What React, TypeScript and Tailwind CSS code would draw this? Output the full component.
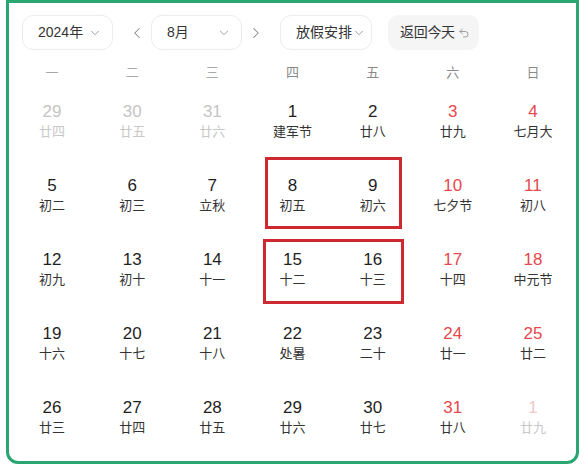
import { ChevronDown, ChevronLeft, ChevronRight, Undo2 } from "lucide-react";

type Day = { n: number; l: string; kind: "muted" | "normal" | "red" | "mutedRed" };

const weekdays = ["一", "二", "三", "四", "五", "六", "日"];

const raw: [number, string][] = [
  [29, "廿四"], [30, "廿五"], [31, "廿六"], [1, "建军节"], [2, "廿八"], [3, "廿九"], [4, "七月大"],
  [5, "初二"], [6, "初三"], [7, "立秋"], [8, "初五"], [9, "初六"], [10, "七夕节"], [11, "初八"],
  [12, "初九"], [13, "初十"], [14, "十一"], [15, "十二"], [16, "十三"], [17, "十四"], [18, "中元节"],
  [19, "十六"], [20, "十七"], [21, "十八"], [22, "处暑"], [23, "二十"], [24, "廿一"], [25, "廿二"],
  [26, "廿三"], [27, "廿四"], [28, "廿五"], [29, "廿六"], [30, "廿七"], [31, "廿八"], [1, "廿九"],
];

const days: Day[] = raw.map(([n, l], i) => {
  const col = i % 7;
  const weekend = col >= 5;
  if (i < 3) return { n, l, kind: "muted" };
  if (i === raw.length - 1) return { n, l, kind: "mutedRed" };
  return { n, l, kind: weekend ? "red" : "normal" };
});

function Select({ label, width, pad }: { label: string; width: string; pad: string }) {
  return (
    <div
      className={`flex h-[35px] items-center justify-between rounded-[11px] border border-[#ececec] bg-white text-[14px] text-[#333] ${width} ${pad}`}
    >
      <span>{label}</span>
      <ChevronDown size={14} strokeWidth={1.4} className="text-[#888]" />
    </div>
  );
}

export default function App() {
  return (
    <div
      className="h-[470px] w-[586px] bg-white"
      style={{ fontFamily: '"Liberation Sans", "Noto Sans CJK SC", sans-serif' }}
    >
      <div className="relative ml-[6px] h-[464px] w-[573px] rounded-b-[12px] border-[3px] border-[#2aa673]">
        <div className="flex items-center pl-[13px] pt-[12px]">
          <Select label="2024年" width="w-[91px]" pad="pl-[15px] pr-[10px]" />
          <ChevronLeft size={18} strokeWidth={1.4} className="ml-[15px] text-[#888]" />
          <div className="ml-[5px]">
            <Select label="8月" width="w-[91px]" pad="pl-[15px] pr-[10px]" />
          </div>
          <ChevronRight size={18} strokeWidth={1.4} className="ml-[5px] text-[#888]" />
          <div className="ml-[15px]">
            <Select label="放假安排" width="w-[92px]" pad="pl-[15px] pr-[5px]" />
          </div>
          <div className="ml-[16px] flex h-[35px] w-[91px] items-center gap-[3px] rounded-[11px] bg-[#f5f5f6] pl-[12px] text-[14px] tracking-[-0.3px] text-[#333]">
            <span>返回今天</span>
            <Undo2 size={12} strokeWidth={1.6} className="text-[#888]" />
          </div>
        </div>

        <div className="mt-[11px] grid h-[23px] grid-cols-7 px-[3px]">
          {weekdays.map((w, i) => (
            <div
              key={w}
              className={`flex items-center justify-center text-[13px] ${i >= 3 ? "text-[#8a8a8a]" : "text-[#aaa]"}`}
            >
              {w}
            </div>
          ))}
        </div>

        <div className="grid grid-cols-7 px-[3px]">
          {days.map((d, i) => {
            const numColor =
              d.kind === "muted"
                ? "text-[#c4c4c4]"
                : d.kind === "mutedRed"
                  ? "text-[#f4c6c6]"
                  : d.kind === "red"
                    ? "text-[#e5484d]"
                    : "text-[#1f1f1f]";
            const lunarColor =
              d.kind === "muted" || d.kind === "mutedRed" ? "text-[#c8c8c8]" : "text-[#333]";
            return (
              <div key={i} className="flex h-[74px] flex-col items-center justify-center">
                <span className={`text-[17px] leading-[22px] ${numColor}`}>{d.n}</span>
                <span className={`text-[13px] leading-[18px] ${lunarColor}`}>{d.l}</span>
              </div>
            );
          })}
        </div>

        <div className="pointer-events-none absolute left-[256px] top-[154px] h-[72px] w-[137px] border-[3px] border-[#cc2a30]" />
        <div className="pointer-events-none absolute left-[254px] top-[236px] h-[65px] w-[141px] border-[3px] border-[#cc2a30]" />
      </div>
    </div>
  );
}
